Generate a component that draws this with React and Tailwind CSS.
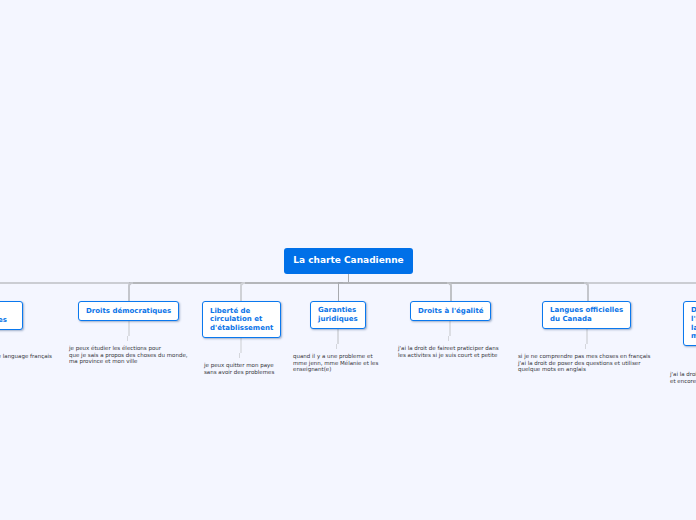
const font = { fontFamily: '"DejaVu Sans", Verdana, sans-serif' };

const nodes = [
  { left: -60, top: 301, width: 83, height: 29, lines: ['Libertés', 'fondamentales'] },
  { left: 78, top: 301, width: 101, height: 20, lines: ['Droits démocratiques'] },
  { left: 202, top: 301, width: 79, height: 37, lines: ['Liberté de', 'circulation et', "d'établissement"] },
  { left: 310, top: 301, width: 56, height: 28, lines: ['Garanties', 'juridiques'] },
  { left: 410, top: 301, width: 81, height: 20, lines: ["Droits à l'égalité"] },
  { left: 542, top: 301, width: 89, height: 28, lines: ['Langues officielles', 'du Canada'] },
  { left: 683, top: 301, width: 90, height: 45, lines: ['Droits à', "l'instruction dans", 'la langue de la', 'minorité'] },
];

const notes = [
  { left: -44, top: 353, lines: ['je peux parler le language français'] },
  { left: 69, top: 345, lines: ['je peux étudier les élections pour', 'que je sais a propos des choses du monde,', 'ma province et mon ville'] },
  { left: 204, top: 362, lines: ['je peux quitter mon paye', 'sans avoir des problemes'] },
  { left: 293, top: 353, lines: ['quand il y a une probleme et', 'mme jenn, mme Mélanie et les', 'enseignant(e)'] },
  { left: 398, top: 345, lines: ["j'ai la droit de faireet praticiper dans", 'les activites si je suis court et petite'] },
  { left: 518, top: 353, lines: ['si je ne comprendre pas mes choses en français', "j'ai la droit de poser des questions et utiliser", 'quelque mots en anglais'] },
  { left: 670, top: 371, lines: ["j'ai la droit d'apprendre", 'et encore'] },
];

// trunk segments between the branches, darker towards the middle
const trunk = [
  [0, 129, 'bg-[#cbcdd3]'],
  [129, 209, 'bg-[#b4b6ba]'],
  [338, 112, 'bg-[#b0b2b6]'],
  [450, 137, 'bg-[#b4b6ba]'],
  [587, 109, 'bg-[#cbcdd3]'],
];

// stems from trunk to node: [x, height, border colour, corner]
const branches = [
  [128, 18, 'border-[#c4c6cc]', 'border-l-2 border-t-2 rounded-tl-[4px]'],
  [240, 18, 'border-[#cfd1d6]', 'border-l-2 border-t-2 rounded-tl-[4px]'],
  [338, 18, 'border-[#a8aaae]', 'border-l border-t'],
  [447, 18, 'border-[#c0c2c6]', 'border-r-2 border-t-2 rounded-tr-[4px]'],
  [584, 18, 'border-[#c4c6cc]', 'border-r-2 border-t-2 rounded-tr-[4px]'],
];

// tails from node to note: [x, top, colour]
const tails = [
  [129, 321, 'bg-[#dcdee4]'],
  [241, 338, 'bg-[#e0e2e8]'],
  [338, 329, 'bg-[#d8dae0]'],
  [450, 321, 'bg-[#dcdee4]'],
  [587, 329, 'bg-[#dcdee4]'],
];

export default function App() {
  return (
    <div className="relative h-[520px] w-[696px] overflow-hidden bg-[#f4f6ff]" style={font}>
      {trunk.map(([left, width, colour]) => (
        <div key={left} className={`absolute top-[282px] h-[2px] ${colour}`} style={{ left, width }} />
      ))}

      <div className="absolute left-[348px] top-[274px] h-[8px] w-px bg-[#a9abb0]" />

      {branches.map(([left, height, colour, corner]) => (
        <div key={left} className={`absolute top-[282px] w-[5px] ${colour} ${corner}`} style={{ left, height: height + 1 }} />
      ))}

      {tails.map(([x, top, colour]) => (
        <div key={x} className="absolute flex flex-col items-start" style={{ left: x - 1, top }}>
          <div className={`h-[15px] w-[2px] ${colour}`} />
          <div className={`-ml-px h-[5px] w-px bg-[#d4d6dc]`} />
        </div>
      ))}

      <div className="absolute left-[284px] top-[248px] flex h-[26px] w-[129px] items-center justify-center rounded-[3px] bg-[#0070e8] text-[9px] font-bold text-white">
        La charte Canadienne
      </div>

      {nodes.map((n) => (
        <div
          key={n.left}
          className="absolute flex flex-col justify-center rounded-[3px] border-[1.5px] border-[#0a78ee] bg-white pl-[7px] text-[7px] font-bold leading-[8.6px] text-[#0a74e8] shadow-[1px_1px_2px_rgba(60,90,140,0.45)]"
          style={{ left: n.left, top: n.top, width: n.width, height: n.height }}
        >
          {n.lines.map((l) => (
            <div key={l} className="whitespace-nowrap">{l}</div>
          ))}
        </div>
      ))}

      {notes.map((n) => (
        <div
          key={n.left}
          className="absolute text-[5.5px] leading-[6.7px] text-[#33343a]"
          style={{ left: n.left, top: n.top }}
        >
          {n.lines.map((l) => (
            <div key={l} className="whitespace-nowrap">{l}</div>
          ))}
        </div>
      ))}
    </div>
  );
}
